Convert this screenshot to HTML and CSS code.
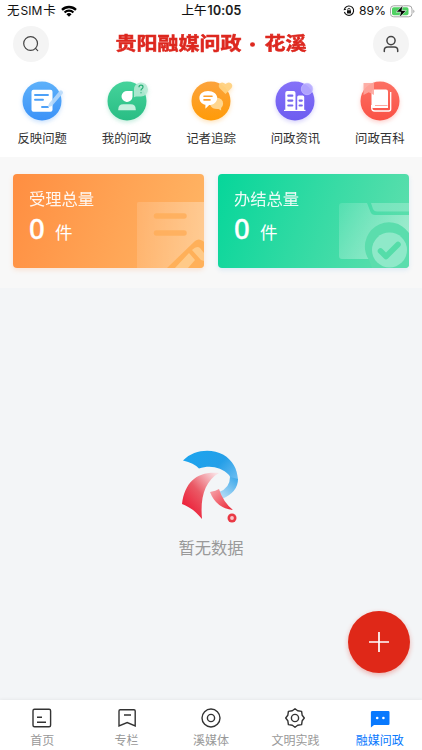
FILE: index.html
```html
<!DOCTYPE html>
<html lang="zh-CN">
<head>
<meta charset="utf-8">
<meta name="viewport" content="width=device-width, initial-scale=1">
<title>贵阳融媒问政·花溪</title>
<link rel="stylesheet" href="styles.css">
</head>
<body>
<div class="app">
  <div class="status">
    <div class="status-left"><span class="carrier">无<span class="sim">SIM</span>卡</span>
      <svg width="16" height="12" viewBox="0 0 16 12"><path d="M.2 4.1a11 11 0 0 1 15.6 0L14.2 5.7a8.8 8.8 0 0 0-12.4 0ZM2.8 6.7a7.4 7.4 0 0 1 10.4 0l-1.6 1.6a5.1 5.1 0 0 0-7.2 0ZM5.4 9.2a3.7 3.7 0 0 1 5.2 0L8 11.8Z" fill="#000"/></svg>
    </div>
    <div class="clock">上午<span class="digits">10:05</span></div>
    <div class="status-right">
      <svg width="12" height="12" viewBox="0 0 12 12" fill="none" stroke="#111"><path d="M2 3.1A4.7 4.7 0 1 1 1.4 7" stroke-width="1.1"/><path d="M.5 5.2 1.5 2.7 3.3 4.7Z" fill="#111" stroke="none"/><path d="M4.8 5.6V4.5a1.2 1.2 0 0 1 2.4 0v1.1" stroke-width=".8"/><rect x="4" y="5.3" width="4" height="3.2" rx=".4" fill="#111" stroke="none"/></svg>
      <span class="percent">89%</span>
      <svg width="26" height="13" viewBox="0 0 26 13"><rect x=".5" y=".8" width="21.5" height="11" rx="3.2" fill="#fff" stroke="#a5a5a5"/><rect x="2" y="2.3" width="16.5" height="8" rx="1.8" fill="#50d163"/><path d="M23.3 4.4q2.4 1.9 0 3.8Z" fill="#a5a5a5"/><path d="M13 .3 6.2 7.1h4.5L9.4 12.5l6.9-7h-4.5Z" fill="#000" stroke="#fff" stroke-width=".6"/></svg>
    </div>
  </div>

  <header class="header">
    <button class="round" aria-label="搜索"><svg width="36" height="36" viewBox="0 0 36 36" fill="none" stroke="#444" stroke-width="1.2" stroke-linecap="round"><circle cx="17.6" cy="17.5" r="6.9"/><path d="m22.5 22.4 2.2 2.2"/></svg></button>
    <h1 class="brand"><span>贵阳融媒问政</span><i></i><span>花溪</span></h1>
    <button class="round" aria-label="我的"><svg width="36" height="36" viewBox="0 0 36 36" fill="none" stroke="#444" stroke-width="1.5" stroke-linecap="round"><circle cx="18" cy="14.6" r="4.1"/><path d="M11.3 25.4v-1.3q0-3.2 3.5-3.2h6.4q3.5 0 3.5 3.2v1.3"/></svg></button>
  </header>

  <nav class="shortcuts">
    <a class="shortcut"><svg class="blue" viewBox="0 0 48 48">
      <defs><linearGradient id="b" x2="0" y2="1"><stop stop-color="#5eb1fa"/><stop offset="1" stop-color="#3b92f8"/></linearGradient></defs>
      <circle cx="24" cy="24" r="19.5" fill="url(#b)"/><rect x="13.5" y="12.8" width="21" height="22" rx="2" fill="#fff"/><path d="M17 18h13M17 22.8h8M24 30h6" stroke="#4da0f7" stroke-width="1.9" stroke-linecap="round"/><path d="m31.2 26.2 10.5-12.5q1.3-1 2.6.3 1.3 1.2.4 2.5L34 29l-4.3 1.3Z" fill="#b7d9fb" fill-opacity=".88"/></svg><span>反映问题</span></a>
    <a class="shortcut"><svg class="green" viewBox="0 0 48 48">
      <defs><linearGradient id="g" x2="0" y2="1"><stop stop-color="#45d39b"/><stop offset="1" stop-color="#29bd84"/></linearGradient></defs>
      <circle cx="24" cy="24" r="19.5" fill="url(#g)"/><path d="M24.5 14h5v5.7A5.5 5.5 0 1 1 24.5 14Z" fill="#fff"/><path d="M15.3 33.3v-1q0-5 5-5h7.4q5 0 5 5v1Z" fill="#c6f0df"/><path d="M31 20.3V13a7 7 0 1 1 7 6.5h-5Z" fill="#b5ead4" fill-opacity=".9"/><path d="M36 10.2q0-2 2-2t2 1.8q0 1.1-1 1.7-1 .6-1 1.9M38 15.2v1" fill="none" stroke="#25ae75" stroke-width="1.2"/></svg><span>我的问政</span></a>
    <a class="shortcut"><svg class="orange" viewBox="0 0 48 48">
      <defs><linearGradient id="o" x2="0" y2="1"><stop stop-color="#fca33c"/><stop offset="1" stop-color="#ff9b08"/></linearGradient></defs>
      <circle cx="24" cy="24" r="19.5" fill="url(#o)"/><path d="M29.5 20.5q6.6 1 6.6 6.2 0 2.5-2 4.4v2.5L31.5 32q-6 .5-8.2-3.5Z" fill="#ffd68e"/><path d="M21 14c5.4 0 9.2 3 9.2 7s-3.8 7.1-8 7.1l-3.8 3.6v-3.9c-3.8-.8-6-3.5-6-6.8 0-4 3.4-7 8.6-7Z" fill="#fff"/><path d="M17 19.2h8M17 22.9h6" stroke="#fba02c" stroke-width="1.6" stroke-linecap="round"/><path d="m38.5 17-6-6q-1.800-2.700.5-4.700 2.700-2 5.500.8 2.800-2.800 5.500-.8 2.300 2 .5 4.700Z" fill="#ffd17f" fill-opacity=".94"/></svg><span>记者追踪</span></a>
    <a class="shortcut"><svg class="purple" viewBox="0 0 48 48">
      <defs><linearGradient id="p" x2="0" y2="1"><stop stop-color="#8571f8"/><stop offset="1" stop-color="#6d5cf0"/></linearGradient></defs>
      <circle cx="24" cy="24" r="19.5" fill="url(#p)"/><path d="M14.300 33.5V16q0-2 2-2h6.200q2 0 2 2v17.5h1.700V20q0-1.500 1.500-1.500h4Q33.200 18.500 33.200 20v13.5" fill="#fff"/><path d="M13 33.400h21.500" stroke="#fff" stroke-width="1.200"/><path d="M17.300 18.700h4M17.300 23.600h4M17.300 28.500h4M28.600 23.600h2.200M28.600 28.500h2.200" stroke="#7969ed" stroke-width="2.200" stroke-linecap="round"/><circle cx="36" cy="12" r="5.700" fill="#b5a8ff" fill-opacity=".9" stroke="#c7bfff" stroke-width=".7"/></svg><span>问政资讯</span></a>
    <a class="shortcut"><svg class="red" viewBox="0 0 48 48">
      <defs><linearGradient id="r" x2="0" y2="1"><stop stop-color="#fc7164"/><stop offset="1" stop-color="#fa5145"/></linearGradient></defs>
      <circle cx="24" cy="24" r="19.5" fill="url(#r)"/><path d="M18.500 12.500h11.500q2 0 2 2v16.500H17q-1.500 0-1.500-1.500V15.500q0-3 3-3Z" fill="#fff"/><path d="M15.700 28v3q0 3 3 3h14q2 0 2-2V15" fill="none" stroke="#fff" stroke-width="1.300"/><path d="M19 28.500h12.500" stroke="#fda79f" stroke-width="1"/><path d="M7.500 6H18v12l-5.300-2.700L7.500 18Z" fill="#fda79f" fill-opacity=".9"/></svg><span>问政百科</span></a>
  </nav>

  <section class="stats">
    <article class="card card-orange">
      <svg class="art" width="67" height="66" viewBox="0 0 67 66"><defs><linearGradient id="paper" x2="1"><stop stop-color="#fff" stop-opacity=".13"/><stop offset="1" stop-color="#fff" stop-opacity=".3"/></linearGradient></defs><path d="M0 1.500Q0 0 1.500 0H67v66H0Z" fill="url(#paper)"/><path d="M19.500 14H47M19.500 31H47" stroke="#ffad58" stroke-opacity=".8" stroke-width="5.500" stroke-linecap="round"/><path d="M30 66 58 39q3.500-3 8 0l1 1v26Z" fill="#ffb059"/><path d="m38 66 14-15 6 7-7 8ZM55 48q5-5 8-2l4 5v8l-3-1Z" fill="#ffca88"/></svg>
      <h2>受理总量</h2><p><b>0</b><span>件</span></p>
    </article>
    <article class="card card-green">
      <svg class="art" width="70" height="66" viewBox="0 0 70 66"><defs><linearGradient id="folder" x2="1" y2=".5"><stop stop-color="#fff" stop-opacity=".12"/><stop offset="1" stop-color="#fff" stop-opacity=".4"/></linearGradient></defs><path d="M0 4q0-3 3-3h25l3.500 9q1.200 3 4.500 3h34v44H3q-3 0-3-3Z" fill="url(#folder)"/><path d="M32 1h38v8.500H38q-3.200 0-4.200-3Z" fill="#fff" fill-opacity=".24"/><path d="M30 58a22.500 22.500 0 0 1 40-27v35H33Z" fill="#5bddad"/><circle cx="50.500" cy="48" r="17.500" fill="#8fe9c9"/><path d="m41.500 49 5.500 5.500L59 42.500" fill="none" stroke="#55dda9" stroke-width="5.600" stroke-linecap="round" stroke-linejoin="round"/></svg>
      <h2>办结总量</h2><p><b>0</b><span>件</span></p>
    </article>
  </section>

  <main class="empty">
    <svg width="60" height="74" viewBox="0 0 60 74">
      <defs><linearGradient id="sky" x1="0" y1=".2" x2="1" y2=".75"><stop stop-color="#1ba4ee"/><stop offset=".6" stop-color="#259fe8"/><stop offset="1" stop-color="#65baf0"/></linearGradient><linearGradient id="sky2" x1=".9" y1="0" x2=".2" y2="1"><stop stop-color="#3ba8ea"/><stop offset="1" stop-color="#b9def6"/></linearGradient><linearGradient id="rose" x1=".1" y1=".9" x2=".9" y2="0"><stop stop-color="#ed1531"/><stop offset=".5" stop-color="#ea5965"/><stop offset="1" stop-color="#fae0e4"/></linearGradient><linearGradient id="leg" x2="1" y2="1"><stop stop-color="#f8aaaf"/><stop offset="1" stop-color="#e92031"/></linearGradient></defs>
      <path d="M2 10.500C13-1 31-1.500 42 4.500c10 6 14 14 15 25L49 33q2-4-1-8C40 17 29 15 18 18.500Q13 13 2 10.500Z" fill="url(#sky)"/>
      <path d="M57 29q0 13-16 20-3-3-3-7 11-4 11-15Z" fill="url(#sky2)"/>
      <path d="M1 54C4 31 17 21 38 23 24 31 19 47 21 69 14 61 9 57 1 54Z" fill="url(#rose)"/>
      <path d="M29 42q6-1 9-3 4 13 14 21-17-2-23-18Z" fill="url(#leg)"/>
      <circle cx="51" cy="68" r="4.500" fill="#e93945"/><circle cx="51" cy="68" r="1.900" fill="#f9c5c9"/>
    </svg>
    <p>暂无数据</p>
    <button class="add" aria-label="新增"><svg width="20" height="20" viewBox="0 0 20 20"><path d="M0 10h20M10 0v20" stroke="#fff" stroke-width="1.700"/></svg></button>
  </main>

  <footer class="tabs">
    <a class="tab"><svg viewBox="0 0 22 22"><rect x="2" y="2.200" width="17.600" height="17.600" rx="1.500"/><path d="M6 10.200h5M6 15.200h9"/></svg><span>首页</span></a>
    <a class="tab"><svg viewBox="0 0 22 22"><path d="M4.200 2.800H18q1.200 0 1.200 1.200v15l-8-3.400-8.200 3.400V4q0-1.200 1.200-1.200ZM8 8h7"/></svg><span>专栏</span></a>
    <a class="tab"><svg viewBox="0 0 22 22"><circle cx="11" cy="11" r="9"/><circle cx="11" cy="11" r="3.600"/></svg><span>溪媒体</span></a>
    <a class="tab"><svg viewBox="0 0 22 22"><path d="m11 1.700 2.700 2.100 3.900.6.600 3.900 2.100 2.700-2.100 2.700-.600 3.900-3.900.600-2.700 2.100-2.700-2.100-3.900-.600-.600-3.900L1.700 11l2.100-2.700.6-3.900 3.900-.6Z" stroke-linejoin="round"/><circle cx="11" cy="11" r="3.600"/></svg><span>文明实践</span></a>
    <a class="tab active"><svg viewBox="0 0 22 22"><path d="M3.500 4.100h15.800q1.200 0 1.200 1.200v11.400q0 1.200-1.200 1.200H5L1.900 20.500V5.300q0-1.200 1.600-1.200Z" fill="#0879fe" stroke="none"/><g fill="#fff" stroke="none"><circle cx="8.200" cy="11" r="1.300"/><circle cx="14.400" cy="11" r="1.300"/></g></svg><span>融媒问政</span></a>
  </footer>
</div>
</body>
</html>
```
FILE: styles.css
```css
* { box-sizing: border-box; }
body { margin: 0; font-family: Inter, "Noto Sans CJK SC", sans-serif; }
h1, h2, p { margin: 0; }
button { border: 0; padding: 0; }
svg { display: block; flex: none; }
.app { width: 422px; height: 750px; display: flex; flex-direction: column; background: #fff; overflow: hidden; }
.status { height: 22px; flex: none; display: grid; grid-template-columns: 1fr auto 1fr; align-items: center; padding: 0 6px 0 7px; font-size: 12.5px; line-height: 20px; color: #111; }
.status-left, .status-right { display: flex; align-items: center; }
.status-left { gap: 5px; }
.sim { font-size: 12px; margin: 0 1px; }
.clock { font-weight: 400; white-space: nowrap; -webkit-text-stroke: .2px #111; }
.digits { font-weight: 500; margin-left: 1px; letter-spacing: .2px; }
.status-right { justify-content: flex-end; gap: 4px; }
.percent { font-size: 12.2px; }
.header { height: 43px; flex: none; display: flex; justify-content: space-between; align-items: center; padding: 0 13px; }
.round { width: 36px; height: 36px; border-radius: 50%; background: #f4f4f4; }
.brand { display: flex; align-items: center; color: #dd281f; font-size: 21px; line-height: 24px; font-weight: 700; -webkit-text-stroke: .6px #dd281f; transform: scaleY(.88); }
.brand i { width: 5px; height: 5px; border-radius: 50%; background: #dd281f; margin: 0 10px 0 8px; }
.shortcuts { height: 92px; flex: none; display: flex; padding-top: 12px; }
.shortcut { flex: 1; display: flex; flex-direction: column; align-items: center; color: #333; font-size: 12.4px; line-height: 20px; }
.shortcut svg { width: 48px; height: 48px; overflow: visible; margin-bottom: 4px; }
.blue { filter: drop-shadow(0 2px 2px #3b92f844); }
.green { filter: drop-shadow(0 2px 2px #29bd8444); }
.orange { filter: drop-shadow(0 2px 2px #ff9b0844); }
.purple { filter: drop-shadow(0 2px 2px #6d5cf044); }
.red { filter: drop-shadow(0 2px 2px #fa514544); }
.stats { height: 131px; flex: none; background: #f8f8f8; display: flex; gap: 14px; padding: 17px 13px 20px; }
.card { flex: 1; position: relative; overflow: hidden; border-radius: 4px; color: #fff; padding: 13px 16px; }
.card-orange { background: linear-gradient(110deg, #ff8e41, #ffb766); box-shadow: 0 2px 5px #ff8e4133; }
.card-green { background: linear-gradient(110deg, #06d69a, #62dfae); box-shadow: 0 2px 5px #238be022; }
.art { position: absolute; right: 0; bottom: 0; }
.card h2 { position: relative; font-size: 16.3px; line-height: 24px; font-weight: 400; opacity: .92; }
.card p { position: relative; display: flex; align-items: baseline; line-height: 36px; }
.card b { font: 500 27.5px/36px "Noto Sans"; width: 26px; -webkit-text-stroke: .3px #fff; }
.card span { font-size: 17.5px; }
.empty { position: relative; flex: 1; background: #f3f5f7; display: flex; flex-direction: column; align-items: center; padding-top: 162px; }
.empty p { color: #999; font-size: 16.3px; line-height: 24px; margin-top: 12px; }
.add { position: absolute; right: 12px; bottom: 27px; width: 62px; height: 62px; border-radius: 50%; background: #df2818; display: grid; place-items: center; box-shadow: 0 2px 5px #df281855; }
.tabs { height: 50px; flex: none; background: #fff; display: flex; padding-top: 7px; box-shadow: 0 -1px 3px #0000000d; position: relative; }
.tab { flex: 1; display: flex; flex-direction: column; align-items: center; color: #999; font-size: 12px; line-height: 18px; gap: 3px; }
.tab svg { width: 22px; height: 22px; fill: none; stroke: #333; stroke-width: 1.4; }
.active { color: #0879fe; }
```
